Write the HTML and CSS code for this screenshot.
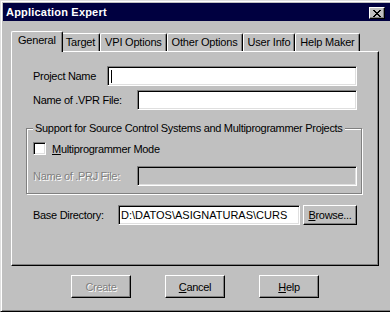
FILE: index.html
```html
<!DOCTYPE html>
<html lang="en">
  <head>
    <meta charset="UTF-8" />
    <link rel="stylesheet" href="styles.css">
  </head>
  <body>
    <div class="window">
      <div class="titlebar">
        <span class="title">Application Expert</span>
        <div class="close-btn">
          <svg width="8" height="7" viewBox="0 0 8 7" shape-rendering="crispEdges">
            <path d="M0 0h2v1h-2zM6 0h2v1h-2zM1 1h2v1h-2zM5 1h2v1h-2zM2 2h4v1h-4zM3 3h2v1h-2zM2 4h4v1h-4zM1 5h2v1h-2zM5 5h2v1h-2zM0 6h2v1h-2zM6 6h2v1h-2z" fill="#000"/>
          </svg>
        </div>
      </div>
      <div class="dialog">
        <div class="tabs">
          <div class="tab active">General</div>
          <div class="tab">Target</div>
          <div class="tab">VPI Options</div>
          <div class="tab">Other Options</div>
          <div class="tab">User Info</div>
          <div class="tab">Help Maker</div>
        </div>
        <div class="panel">
          <div class="row row-project">
            <span class="label label-project">Project Name</span>
            <div class="edit edit-project"><span class="caret"></span></div>
          </div>
          <div class="row row-vpr">
            <span class="label label-wide">Name of .VPR File:</span>
            <div class="edit edit-file"></div>
          </div>
          <fieldset class="group">
            <legend>Support for Source Control Systems and Multiprogrammer Projects</legend>
            <div class="check-row">
              <span class="checkbox"></span>
              <span><u>M</u>ultiprogrammer Mode</span>
            </div>
            <div class="row row-prj">
              <span class="label label-wide disabled">Name of .PRJ File:</span>
              <div class="edit edit-file edit-disabled"></div>
            </div>
          </fieldset>
          <div class="row row-base">
            <span class="label label-base">Base Directory:</span>
            <div class="edit edit-base">D:\DATOS\ASIGNATURAS\CURS</div>
            <div class="button browse"><u>B</u>rowse...</div>
          </div>
        </div>
        <div class="buttons">
          <div class="button big disabled">Create</div>
          <div class="button big"><u>C</u>ancel</div>
          <div class="button big"><u>H</u>elp</div>
        </div>
      </div>
    </div>
  </body>
</html>
```

FILE: styles.css
```css
body {
  margin: 0;
  background: #c0c0c0;
  font-family: "Liberation Sans", Arial, sans-serif;
  font-size: 11px;
  color: #000;
}
.window {
  width: 390px;
  height: 312px;
  box-sizing: border-box;
  background: #c0c0c0;
  border-left: 1px solid #dfdfdf;
  border-top: 1px solid #dfdfdf;
  border-bottom: 1px solid #000;
  box-shadow: inset 1px 1px #fff, inset 0 -1px #808080;
  padding: 2px 0 1px 2px;
}
.titlebar {
  height: 18px;
  background: #000040;
  display: flex;
  align-items: flex-start;
  padding: 0 5px 0 3px;
}
.title {
  color: #fff;
  font-weight: bold;
  font-size: 11px;
  letter-spacing: 0.2px;
  line-height: 18px;
}
.close-btn {
  margin-left: auto;
  margin-top: 4px;
  width: 16px;
  height: 12px;
  box-sizing: border-box;
  background: #c0c0c0;
  border-top: 1px solid #fff;
  border-left: 1px solid #fff;
  border-right: 1px solid #000;
  border-bottom: 1px solid #000;
  box-shadow: inset -1px -1px #808080;
  display: flex;
  align-items: center;
  justify-content: center;
}
.close-btn svg {
  display: block;
}

.dialog {
  padding: 10px 0 0 8px;
}
.tabs {
  display: flex;
  align-items: flex-end;
  height: 20px;
  padding-left: 2px;
  letter-spacing: -0.2px;
}
.tab {
  height: 18px;
  box-sizing: border-box;
  padding: 0 4px;
  line-height: 16px;
  border-top: 1px solid #fff;
  border-left: 1px solid #fff;
  border-right: 1px solid #000;
  border-top-left-radius: 2px;
  border-top-right-radius: 2px;
  box-shadow: inset -1px 0 #808080;
  white-space: nowrap;
}
.tab.active {
  position: relative;
  z-index: 1;
  height: 21px;
  margin: 0 -2px -1px -2px;
  padding: 0 6px;
  line-height: 16px;
  background: #c0c0c0;
}

.panel {
  width: 368px;
  height: 215px;
  box-sizing: border-box;
  border-top: 1px solid #fff;
  border-left: 1px solid #fff;
  border-right: 1px solid #000;
  border-bottom: 1px solid #000;
  box-shadow: inset -1px -1px #808080;
  padding: 0 0 0 21px;
  letter-spacing: -0.3px;
}
.row {
  display: flex;
  align-items: center;
  height: 20px;
}
.row-project {
  margin-top: 14px;
}
.row-vpr {
  margin-top: 4px;
}
.label {
  line-height: 13px;
  white-space: nowrap;
}
.label-project {
  width: 74px;
}
.label-wide {
  width: 104px;
}
.label-base {
  width: 85px;
}
.disabled {
  color: #808080;
  text-shadow: 1px 1px #fff;
}
.edit {
  height: 20px;
  box-sizing: border-box;
  background: #fff;
  border-top: 1px solid #808080;
  border-left: 1px solid #808080;
  border-right: 1px solid #fff;
  border-bottom: 1px solid #fff;
  box-shadow: inset 1px 1px #000, inset -1px -1px #dfdfdf;
  padding: 0 2px;
  display: flex;
  align-items: center;
  white-space: nowrap;
  overflow: hidden;
}
.edit-project {
  width: 250px;
}
.edit-file {
  width: 220px;
}
.edit-base {
  width: 182px;
  letter-spacing: 0;
}
.edit-disabled {
  background: #c0c0c0;
}
.caret {
  width: 1px;
  height: 13px;
  background: #000;
  margin-left: 1px;
}

.group {
  width: 336px;
  box-sizing: border-box;
  margin: 12px 0 0 -7px;
  padding: 7px 0 7px 6px;
  border: 1px solid #808080;
  box-shadow: inset 1px 1px #fff, 1px 1px #fff;
  min-width: 0;
}
.group legend {
  padding: 0 2px;
  line-height: 13px;
  background: #c0c0c0;
  white-space: nowrap;
}
.check-row {
  display: flex;
  align-items: center;
  gap: 6px;
  height: 13px;
}
.checkbox {
  width: 13px;
  height: 13px;
  box-sizing: border-box;
  background: #fff;
  border-top: 1px solid #808080;
  border-left: 1px solid #808080;
  border-right: 1px solid #fff;
  border-bottom: 1px solid #fff;
  box-shadow: inset 1px 1px #000, inset -1px -1px #dfdfdf;
}
.row-prj {
  margin-top: 11px;
}
.row-base {
  margin-top: 11px;
}

.button {
  box-sizing: border-box;
  background: #c0c0c0;
  border-top: 1px solid #fff;
  border-left: 1px solid #fff;
  border-right: 1px solid #000;
  border-bottom: 1px solid #000;
  box-shadow: inset -1px -1px #808080;
  display: flex;
  align-items: center;
  justify-content: center;
  white-space: nowrap;
}
.browse {
  width: 54px;
  height: 20px;
  margin-left: 3px;
}
.buttons {
  width: 368px;
  display: flex;
  justify-content: center;
  gap: 34px;
  margin-top: 9px;
  letter-spacing: -0.3px;
}
.big {
  width: 60px;
  height: 23px;
}
```
